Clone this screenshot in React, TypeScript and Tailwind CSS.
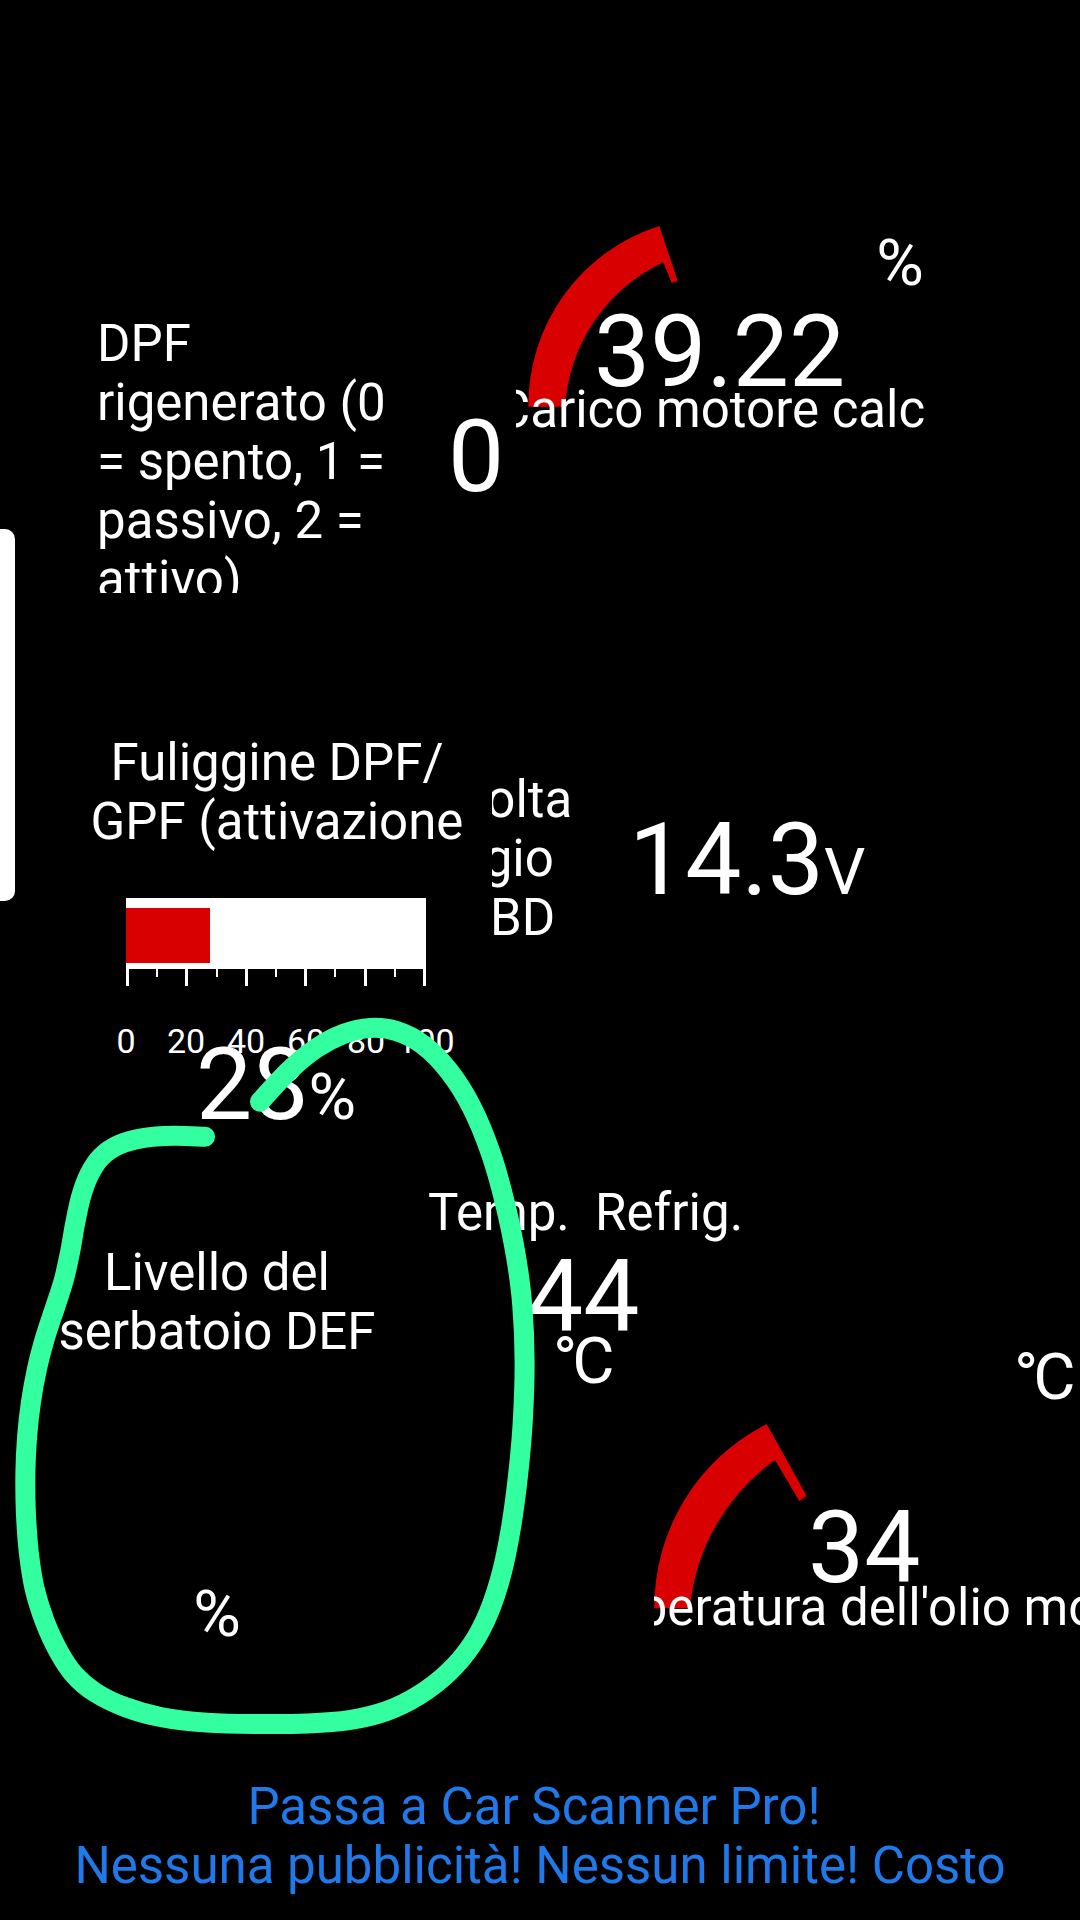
type Pt = [number, number];

const greenRaw: Pt[] = [
  [205, 1136.7], [173.3, 1135], [143.3, 1136.7], [116.7, 1143.3], [100, 1155], [88.3, 1173.3], [80, 1196.7], [75, 1223.3], [70, 1253.3], [65, 1280], [55, 1306.7], [45, 1336.7], [36.7, 1366.7], [30, 1403.3], [26.7, 1436.7],
  [25, 1470], [25, 1510], [28.3, 1553.3], [33.3, 1590], [43.3, 1620], [58.3, 1653.3], [73.3, 1676.7], [93.3, 1693.3], [123.3, 1708.3], [160, 1718.3], [203.3, 1724], [260, 1724], [310, 1724], [350, 1721.7], [386.7, 1713.3], [420, 1696.7], [450, 1673.3], [473.3, 1646.7], [490, 1613.3], [503.3, 1573.3], [511.7, 1526.7], [518.3, 1476.7],
  [523.3, 1426.7], [526, 1360], [523.3, 1303.3], [516.7, 1256.7], [506.7, 1206.7], [491.7, 1150], [473.3, 1106.7], [450, 1068.3], [423.3, 1041.7], [396.7, 1028.3], [370, 1026], [343.3, 1031.7], [316.7, 1046.7], [290, 1066.7], [260, 1101.7],
];

const greenPts: Pt[] = greenRaw.map((p, i) => {
  if (i === 0 || i === greenRaw.length - 1) return p;
  const a = greenRaw[i - 1];
  const c = greenRaw[i + 1];
  return [(a[0] + 2 * p[0] + c[0]) / 4, (a[1] + 2 * p[1] + c[1]) / 4];
});

function curve(p: Pt[]) {
  let d = "";
  for (let i = 0; i < p.length - 1; i++) {
    const a = p[Math.max(i - 1, 0)];
    const b = p[i];
    const c = p[i + 1];
    const e = p[Math.min(i + 2, p.length - 1)];
    d += ` C${(b[0] + (c[0] - a[0]) / 6).toFixed(1)} ${(b[1] + (c[1] - a[1]) / 6).toFixed(1)} ${(c[0] - (e[0] - b[0]) / 6).toFixed(1)} ${(c[1] - (e[1] - b[1]) / 6).toFixed(1)} ${c[0].toFixed(1)} ${c[1].toFixed(1)}`;
  }
  return d;
}

const ticks = [0, 1, 2, 3, 4, 5, 6, 7, 8, 9, 10];
const labels = ["0", "20", "40", "60", "80", "100"];

export default function App() {
  return (
    <div className="relative flex h-[1920px] w-[1080px] flex-col overflow-hidden bg-black pt-[220px] pb-[25px] text-white font-['Roboto',sans-serif]">
      {/* edge handle */}
      <div className="absolute left-0 top-[529px] h-[372px] w-[15px] rounded-r-[10px] bg-white" />

      {/* first row */}
      <div className="flex h-[500px] pl-[97px]">
        <div className="flex h-[300px] w-[419px] items-start pt-[94px]">
          <div className="h-[279px] w-[329px] shrink-0 overflow-hidden whitespace-pre text-[51px] leading-[59px]">
            {"DPF\nrigenerato (0\n= spento, 1 =\npassivo, 2 =\nattivo)"}
          </div>
          <div className="mt-[93px] w-[100px] shrink-0 text-center text-[100px] leading-[100px]">0</div>
        </div>
        <div className="relative isolate flex h-[220px] w-[409px] flex-col">
          <svg className="absolute left-0 top-0 -z-10 overflow-visible" width="409" height="220" viewBox="516 220 409 220">
            <path d="M528.3 406.7 A188 188 0 0 1 659.3 226 L677.7 280.7 L671.7 283 L663.3 262.3 A172 172 0 0 0 565 406.7 Z" fill="#d80000" />
          </svg>
          <div className="ml-[344px] mt-[8px] w-[80px] text-center text-[65px] leading-[70px]">%</div>
          <div className="ml-[78px] mt-[4px] w-[200px] text-center text-[100px] leading-[100px]">39.22</div>
          <div className="-mt-[22px] w-[409px] overflow-hidden whitespace-nowrap text-[51px] leading-[59px]">
            <span className="-ml-[19px] inline-block">Carico motore calcolato</span>
          </div>
        </div>
      </div>

      {/* second row */}
      <div className="flex h-[460px] pl-[77px]">
        <div className="flex w-[415px] flex-col pt-[13px]">
          <div className="w-[400px] whitespace-pre text-center text-[51px] leading-[59px]">
            {"Fuliggine DPF/\nGPF (attivazione"}
          </div>
          <div className="ml-[49px] mt-[47px] h-[71px] w-[300px] bg-white pt-[10px]">
            <div className="h-[55px] w-[84px] bg-[#d80000]" />
          </div>
          <div className="ml-[49px] flex h-[17px] w-[300px] items-start justify-between">
            {ticks.map((t) => (
              <div key={t} className={t % 2 === 0 ? "h-[17px] w-[3px] bg-white" : "h-[8px] w-[2px] bg-white"} />
            ))}
          </div>
          <div className="ml-[19px] mt-[37px] flex text-[34px] leading-[36px]">
            {labels.map((l) => (
              <span key={l} className="w-[60px] text-center">{l}</span>
            ))}
          </div>
          <div className="ml-[119px] -mt-[24px] flex items-baseline whitespace-nowrap text-[100px] leading-[100px]">
            28<span className="text-[65px]">%</span>
          </div>
        </div>
        <div className="flex">
          <div className="mt-[50px] h-[177px] w-[137px] shrink-0 overflow-hidden">
            <div className="-ml-[37px] whitespace-pre text-[51px] leading-[59px]">{"Volta\nggio\nOBD"}</div>
          </div>
          <div className="mt-[90px] flex items-baseline whitespace-nowrap text-[100px] leading-[100px]">
            14.3<span className="text-[65px]">V</span>
          </div>
        </div>
      </div>

      {/* third row */}
      <div className="flex h-[460px] pl-[17px]">
        <div className="flex w-[411px] shrink-0 flex-col">
          <div className="mt-[63px] w-[400px] whitespace-pre text-center text-[51px] leading-[59px]">
            {"Livello del\nserbatoio DEF"}
          </div>
          <div className="ml-[160px] mt-[218px] w-[80px] text-center text-[65px] leading-[70px]">%</div>
        </div>
        <div className="flex w-[226px] shrink-0 flex-col">
          <div className="mt-[3px] whitespace-pre text-[51px] leading-[59px]">Temp.  Refrig.</div>
          <div className="ml-[99px] mt-[5px] text-[100px] leading-[100px]">44</div>
          <div className="ml-[125px] -mt-[21px] text-[65px] leading-[70px] tracking-[-5px]">°C</div>
        </div>
        <div className="relative isolate flex h-[460px] w-[426px] shrink-0 flex-col">
          <svg className="absolute left-0 top-0 -z-10 overflow-visible" width="426" height="460" viewBox="654 1180 426 460">
            <path d="M654.3 1608.3 A205 205 0 0 1 766.7 1424 L806.7 1496 L799.3 1501 L775 1460 A205 205 0 0 0 690 1608.3 Z" fill="#d80000" />
          </svg>
          <div className="ml-[360px] mt-[162px] text-[65px] leading-[70px] tracking-[-5px]">°C</div>
          <div className="ml-[154px] mt-[86px] text-[100px] leading-[100px]">34</div>
          <div className="-mt-[20px] w-[426px] overflow-hidden whitespace-nowrap text-[51px] leading-[59px]">
            <span className="-ml-[115px] inline-block">Temperatura dell'olio motore</span>
          </div>
        </div>
      </div>

      {/* promo footer */}
      <div className="mt-auto text-center text-[51px] leading-[59px] text-[#2079e8]">
        <div className="pr-[12px]">Passa a Car Scanner Pro!</div>
        <div>Nessuna pubblicità! Nessun limite! Costo</div>
      </div>

      {/* hand-drawn annotation */}
      <svg className="absolute left-0 top-0" width="1080" height="1920" viewBox="0 0 1080 1920">
        <path d={`M205 1136.7${curve(greenPts)}`} fill="none" stroke="#33ffa0" strokeWidth="20" strokeLinecap="round" strokeLinejoin="round" />
      </svg>
    </div>
  );
}
